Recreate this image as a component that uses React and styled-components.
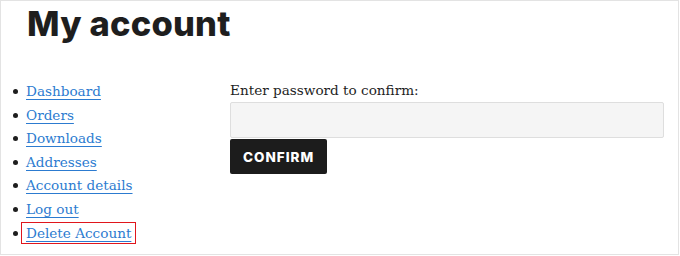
import styled, { createGlobalStyle } from "styled-components";

const GlobalStyle = createGlobalStyle`
  html, body {
    margin: 0;
    padding: 0;
    background: #fff;
  }
`;

const Frame = styled.div`
  box-sizing: border-box;
  width: 679px;
  height: 255px;
  border: 1px solid #e3e3e3;
  padding: 0 0 0 25px;
  overflow: hidden;
`;

const Title = styled.h1`
  margin: 0;
  padding: 3px 0 0 1px;
  font-family: Inter, "Liberation Sans", sans-serif;
  font-weight: 800;
  font-size: 34.5px;
  line-height: 40px;
  color: #1e1e1e;
  letter-spacing: 0.2px;
`;

const Columns = styled.div`
  display: grid;
  grid-template-columns: 204px 434px;
  margin-top: 36px;
`;

const Nav = styled.ul`
  margin: 0;
  padding: 0;
  list-style: none;
`;

const Item = styled.li`
  position: relative;
  height: 23.6px;
  font-family: "DejaVu Serif", serif;
  font-size: 13.6px;
  line-height: 23px;

  &::before {
    content: "";
    position: absolute;
    left: -13px;
    top: 9px;
    width: 5px;
    height: 5px;
    border-radius: 50%;
    background: #1e1e1e;
  }
`;

const NavLink = styled.a`
  color: #2c7bd0;
  text-decoration: underline;
  text-underline-offset: 3px;
  text-decoration-thickness: 1px;
  outline: ${(p) => (p.$marked ? "1px solid #e0161c" : "none")};
  outline-offset: 2px;
  padding: ${(p) => (p.$marked ? "0 2px" : "0")};
  margin-left: ${(p) => (p.$marked ? "-2px" : "0")};
`;

const Form = styled.div`
  display: flex;
  flex-direction: column;
  align-items: flex-start;
  margin-top: -1px;
`;

const Label = styled.label`
  font-family: "DejaVu Serif", serif;
  font-size: 13.6px;
  line-height: 23px;
  color: #1e1e1e;
`;

const Field = styled.input`
  box-sizing: border-box;
  width: 434px;
  height: 36px;
  background: #f5f5f5;
  border: 1px solid #dedede;
  border-radius: 2px;
  margin: 0;
`;

const Button = styled.button`
  box-sizing: border-box;
  height: 35px;
  padding: 0 13px;
  background: #1c1c1c;
  color: #fff;
  border: none;
  border-radius: 2px;
  font-family: Inter, "Liberation Sans", sans-serif;
  font-weight: 800;
  font-size: 13.5px;
  letter-spacing: 1px;
  margin-top: 1px;
`;

const links = [
  "Dashboard",
  "Orders",
  "Downloads",
  "Addresses",
  "Account details",
  "Log out",
  "Delete Account",
];

export default function App() {
  return (
    <>
      <GlobalStyle />
      <Frame>
        <Title>My account</Title>
        <Columns>
          <Nav>
            {links.map((name) => (
              <Item key={name}>
                <NavLink href="#" $marked={name === "Delete Account"}>
                  {name}
                </NavLink>
              </Item>
            ))}
          </Nav>
          <Form>
            <Label htmlFor="pw">Enter password to confirm:</Label>
            <Field id="pw" type="password" />
            <Button>CONFIRM</Button>
          </Form>
        </Columns>
      </Frame>
    </>
  );
}
